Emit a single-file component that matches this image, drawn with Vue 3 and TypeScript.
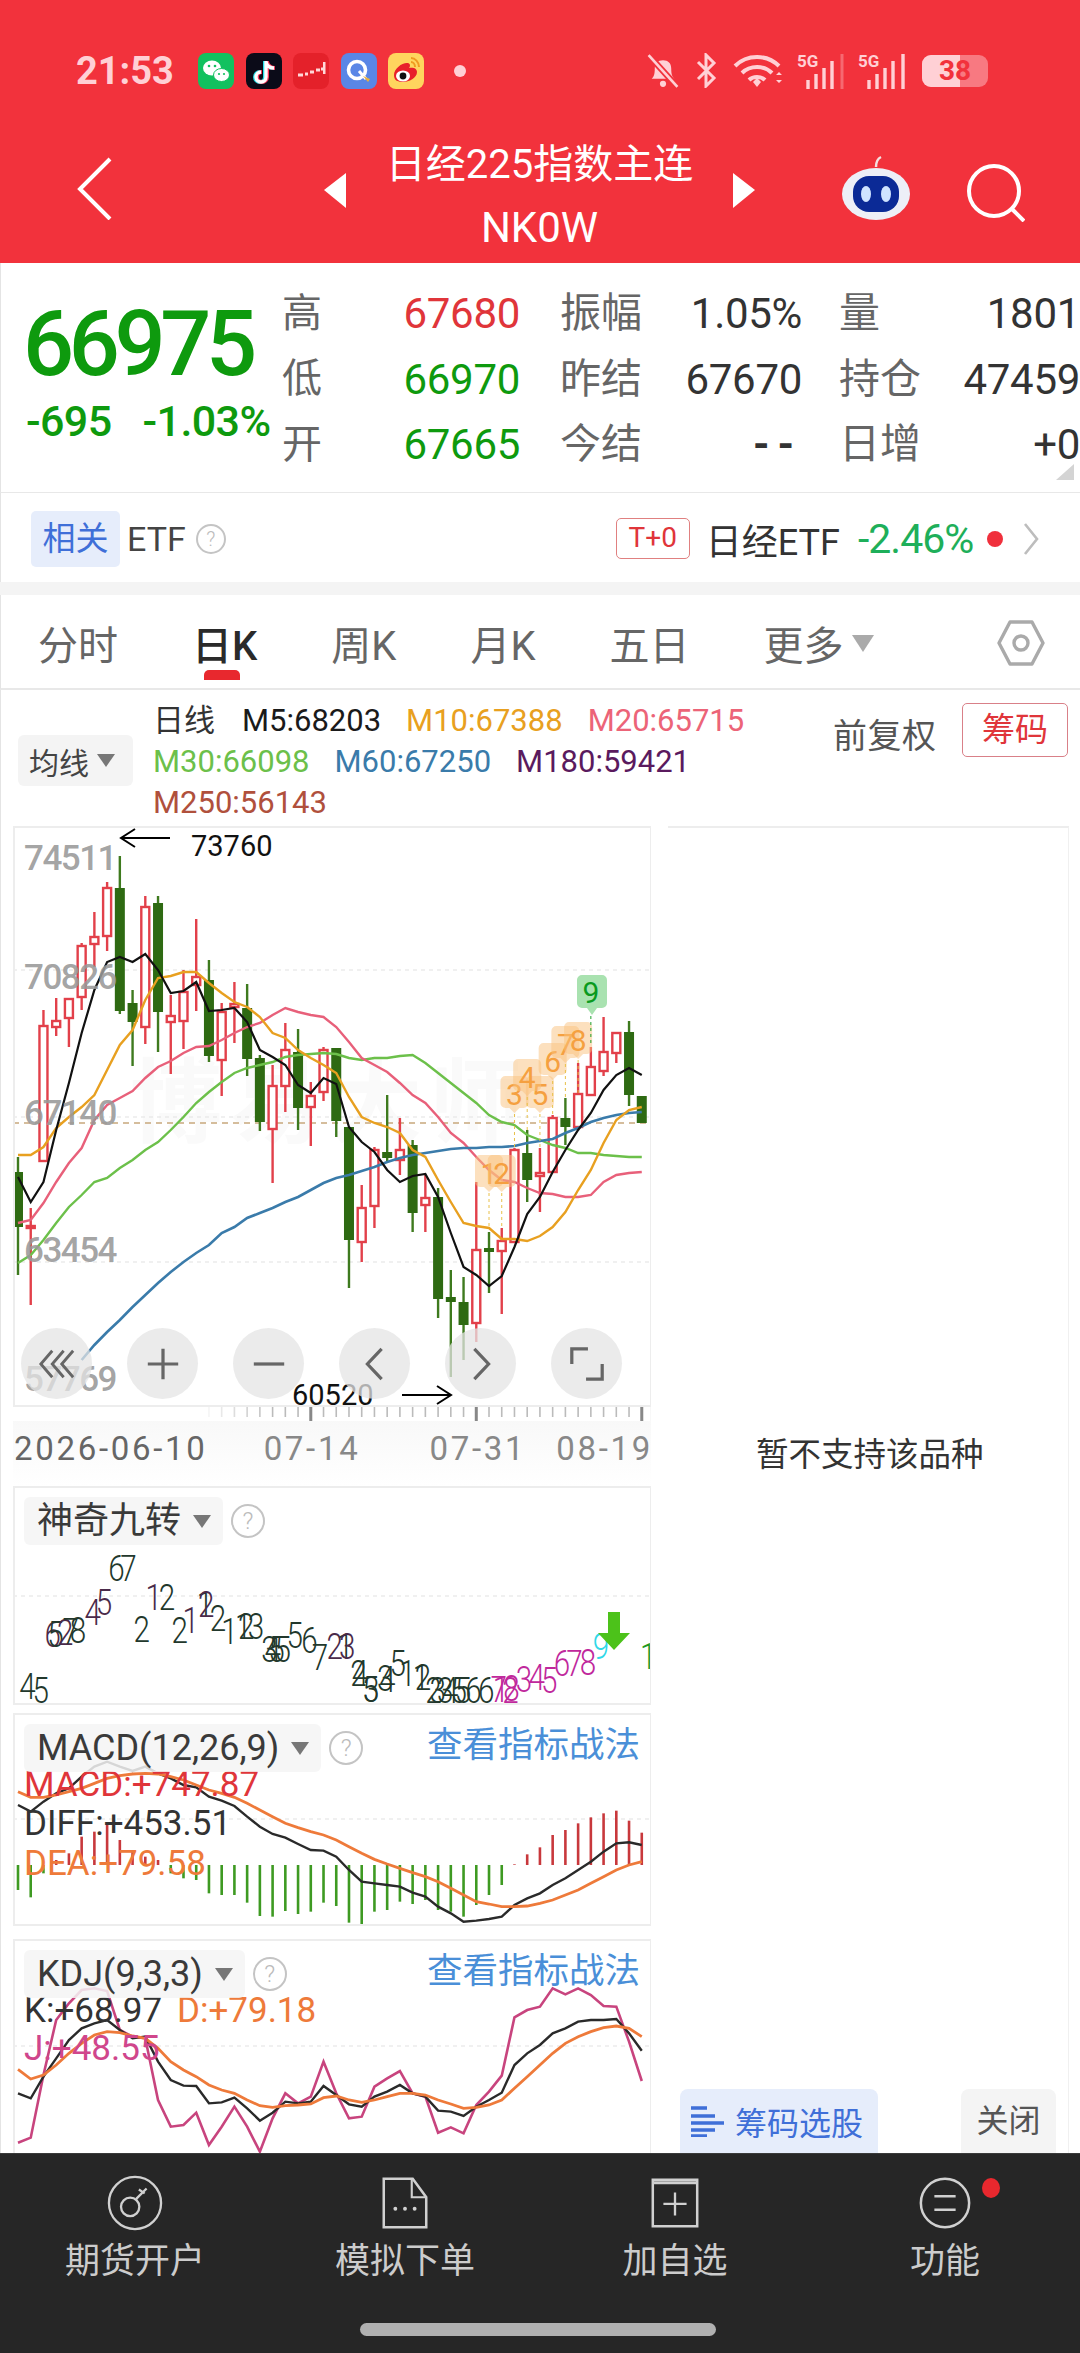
<template>
  <div class="page">
    <header class="top">
      <div class="status">
        <span class="clock">21:53</span>
        <div class="apps">
          <svg class="app" viewBox="0 0 36 36"><rect width="36" height="36" rx="8" fill="#12C15F"/><ellipse cx="14" cy="15" rx="9" ry="7.5" fill="#fff"/><ellipse cx="23.5" cy="22" rx="8" ry="6.5" fill="#fff" stroke="#12C15F"/><circle cx="11" cy="13" r="1.3" fill="#12C15F"/><circle cx="17" cy="13" r="1.3" fill="#12C15F"/><circle cx="21" cy="21" r="1.1" fill="#12C15F"/><circle cx="26" cy="21" r="1.1" fill="#12C15F"/></svg>
          <svg class="app" viewBox="0 0 36 36"><rect width="36" height="36" rx="8" fill="#0B0B18"/><path d="M20 7v16a5 5 0 1 1-5-5M20 8c1 4 4 6 8 6" fill="none" stroke="#25E0E8" stroke-width="4" transform="translate(-1 1)"/><path d="M20 7v16a5 5 0 1 1-5-5M20 8c1 4 4 6 8 6" fill="none" stroke="#F43A5C" stroke-width="4" transform="translate(1 1)"/><path d="M20 7v16a5 5 0 1 1-5-5M20 8c1 4 4 6 8 6" fill="none" stroke="#fff" stroke-width="3.4" transform="translate(0 1)"/></svg>
          <svg class="app" viewBox="0 0 36 36"><rect width="36" height="36" rx="8" fill="#E4212A"/><path d="M5 22h5M12 21h3M17 19h4M23 17h4M28 16h3" stroke="#FFD8D8" stroke-width="3"/><rect x="30" y="9" width="2.5" height="12" fill="#FFD8D8"/></svg>
          <svg class="app" viewBox="0 0 36 36"><rect width="36" height="36" rx="8" fill="#5A86E6"/><circle cx="16" cy="17" r="8.5" fill="none" stroke="#fff" stroke-width="3.6"/><path d="M18 18l7 8" stroke="#fff" stroke-width="3"/><path d="M22 23l5 6 2-3z" fill="#E8B040"/></svg>
          <svg class="app" viewBox="0 0 36 36"><rect width="36" height="36" rx="8" fill="#FFD55E"/><path d="M6 22c0-7 9-13 14-12 3 1 2 4 1 5 4-1 8 0 8 4 0 6-8 10-14 10S6 27 6 22z" fill="#E8202A"/><ellipse cx="15" cy="23" rx="7" ry="5.5" fill="#fff"/><circle cx="15" cy="23" r="3.4" fill="#111"/><path d="M23 5c4 0 8 4 8 9M23 9c2 0 4 2 4 5" fill="none" stroke="#F09A20" stroke-width="2"/></svg>
          <span class="status-dot"></span>
        </div>
        <div class="sys">
          <svg class="s-bell" viewBox="0 0 34 35"><path d="M6 25c2-2 3-4 3-10 0-5 3-8 8-8s8 3 8 8c0 6 1 8 3 10z" fill="#FFD0D5"/><circle cx="17" cy="30" r="3" fill="#FFD0D5"/><path d="M3 2l28 31" stroke="#F2323C" stroke-width="6"/><path d="M3 2l28 31" stroke="#FFD0D5" stroke-width="2.6"/></svg>
          <svg class="s-bt" viewBox="0 0 23 35"><path d="M3 9l16 16-8 8V2l8 8L3 26" fill="none" stroke="#FFD0D5" stroke-width="3"/></svg>
          <svg class="s-wifi" viewBox="0 0 51 35"><path d="M3 13c12-12 32-12 44 0M10 20c8-8 22-8 30 0M17 27c4-4 12-4 16 0" fill="none" stroke="#FFD0D5" stroke-width="4"/><path d="M21 29l4-4 4 4-4 5z" fill="#FFD0D5"/><path d="M44 22l3-3 3 3zM44 27l3 3 3-3z" fill="#FFD0D5"/></svg>
          <svg class="s-sig" viewBox="0 0 47 36"><text x="0" y="14" class="fiveg">5G</text><path d="M11 36V27M19 36V21M27 36V15M35 36V8" stroke="#FFD0D5" stroke-width="3.4"/><path d="M45 36V1" stroke="#FFD0D5" stroke-opacity=".35" stroke-width="3"/></svg>
          <svg class="s-sig" viewBox="0 0 47 36"><text x="0" y="14" class="fiveg">5G</text><path d="M11 36V27M19 36V21M27 36V15M35 36V8M45 36V1" stroke="#FFD0D5" stroke-width="3.4"/></svg>
          <div class="battery"><span class="battery-fill"></span><span class="battery-num">38</span></div>
        </div>
      </div>
      <div class="nav">
        <svg class="back" viewBox="0 0 35 63"><path d="M33 2L3 32l30 30" fill="none" stroke="#fff" stroke-width="4"/></svg>
        <svg class="tri tri-l" viewBox="0 0 22 35"><path d="M22 0v35L0 17z" fill="#fff"/></svg>
        <div class="title">
          <div class="title-main">日经225指数主连</div>
          <div class="title-sub">NK0W</div>
        </div>
        <svg class="tri tri-r" viewBox="0 0 22 35"><path d="M0 0v35l22-18z" fill="#fff"/></svg>
        <svg class="robot" viewBox="0 0 72 65">
          <path d="M36 12c0-5 1-8 5-10" fill="none" stroke="#F4E0E0" stroke-width="2.5"/>
          <ellipse cx="36" cy="39" rx="34" ry="26" fill="#EDEFF7"/>
          <rect x="13" y="21" width="46" height="36" rx="16" fill="#0B2A96"/>
          <ellipse cx="26" cy="39" rx="5" ry="8" fill="#CFE3FF"/>
          <ellipse cx="46" cy="39" rx="5" ry="8" fill="#CFE3FF"/>
        </svg>
        <svg class="search" viewBox="0 0 58 58"><circle cx="27" cy="27" r="25" fill="none" stroke="#fff" stroke-width="4"/><path d="M45 45l12 12" stroke="#fff" stroke-width="4"/></svg>
      </div>
    </header>

    <section class="quote">
      <div class="price-box">
        <div class="price">66975</div>
        <div class="change"><span>-695</span><span>-1.03%</span></div>
      </div>
      <div class="quote-grid">
        <template v-for="row in quoteRows" :key="row[0]">
          <span class="lb">{{ row[0] }}</span><span :class="['val', row[2]]">{{ row[1] }}</span>
          <span class="lb lb2">{{ row[3] }}</span><span :class="['val', 'dark', { dash: row[4] === '--' }]">{{ row[4] }}</span>
          <span class="lb lb3">{{ row[5] }}</span><span class="val dark last">{{ row[6] }}</span>
        </template>
      </div>
      <span class="corner"></span>
    </section>

    <section class="related">
      <span class="rel-tag">相关</span>
      <span class="rel-name">ETF</span>
      <span class="help help-sm">?</span>
      <span class="t0">T+0</span>
      <span class="etf-name">日经ETF</span>
      <span class="etf-pct">-2.46%</span>
      <span class="etf-dot"></span>
      <svg class="etf-more" viewBox="0 0 16 32"><path d="M2 1l12 15L2 31" fill="none" stroke="#BDBDBD" stroke-width="2.6"/></svg>
    </section>

    <div class="strip"></div>

    <nav class="tabs">
      <span v-for="t in tabs" :key="t" :class="['tab', { active: t === '日K' }]">{{ t }}</span>
      <span class="tab more">更多<i class="more-tri"></i></span>
      <svg class="hex" viewBox="0 0 48 46"><path d="M13 2h22l11 21-11 21H13L2 23z" fill="none" stroke="#AAA" stroke-width="3.4" stroke-linejoin="round"/><circle cx="24" cy="23" r="7" fill="none" stroke="#AAA" stroke-width="3.4"/></svg>
    </nav>

    <section class="legend">
      <div class="ma-pill">均线<i class="dd"></i></div>
      <div class="ma-values">
        <div class="ma-row"><span class="ma-title">日线</span><span v-for="m in maRow1" :key="m.t" :style="{ color: m.c }">{{ m.t }}</span></div>
        <div class="ma-row"><span v-for="m in maRow2" :key="m.t" :style="{ color: m.c }">{{ m.t }}</span></div>
        <div class="ma-row"><span style="color: #B0503C">M250:56143</span></div>
      </div>
      <span class="fq">前复权</span>
      <span class="chip-btn">筹码</span>
    </section>

    <main class="body">
      <div class="charts">
        <div class="panel main-panel">
          <svg class="plot" viewBox="13 826 637 580">
            <text x="330" y="1135" class="watermark" text-anchor="middle">博易大师</text>
            <path v-for="g in mainGrid" :key="g" :d="`M13 ${g}H650`" class="grid"/>
            <path d="M13 1123H650" stroke="#C8A87C" stroke-width="1.4" stroke-dasharray="6 5"/>
            <g v-for="(c, i) in candles" :key="i">
              <path :d="`M${cx(i)} ${c[0]}V${c[3]}`" :stroke="c[4] === 'r' ? '#E2404A' : '#3E7A1E'" stroke-width="2.4"/>
              <rect v-if="c[4] === 'r'" :x="cx(i) - 4" :y="c[1]" width="8" :height="Math.max(c[2] - c[1], 2)" fill="#fff" stroke="#E2404A" stroke-width="2.4"/>
              <rect v-else :x="cx(i) - 5" :y="c[1]" width="10" :height="c[2] - c[1]" fill="#2E6A12"/>
            </g>
            <polyline v-for="l in maLines" :key="l.c" :points="linePts(l.y, l.from)" fill="none" :stroke="l.c" :stroke-width="l.w"/>
            <g v-for="b in bubbles" :key="b.t + b.i">
              <path :d="`M${cx(b.i)} ${b.y + 20}V${b.y + 55}`" stroke="#E8C048" stroke-width="1" stroke-dasharray="3 3"/>
              <path :d="bubble(cx(b.i), b.y)" fill="#F9C27E" fill-opacity=".5"/>
              <text :x="cx(b.i)" :y="b.y + 11" class="bubble-num" text-anchor="middle">{{ b.t }}</text>
            </g>
            <path :d="`M${cx(45)} 1016V1046`" stroke="#1FA02E" stroke-width="1" stroke-dasharray="3 3"/>
            <path d="M582 975h20a5 5 0 0 1 5 5v23a5 5 0 0 1-5 5h-5l-5 7-5-7h-5a5 5 0 0 1-5-5v-23a5 5 0 0 1 5-5z" fill="#A9E2B0"/>
            <text x="591" y="1003" class="nine" text-anchor="middle">9</text>
            <text v-for="a in axisLabels" :key="a.t" x="24" :y="a.y" class="axis">{{ a.t }}</text>
            <text x="191" y="856" class="mark">73760</text>
            <path d="M170 838H122M135 829l-14 9 14 9" fill="none" stroke="#000" stroke-width="2"/>
            <text x="292" y="1405" class="mark">60520</text>
            <path d="M402 1395H450M437 1386l14 9-14 9" fill="none" stroke="#000" stroke-width="2"/>
          </svg>
          <div class="tools">
            <span class="tool"><svg viewBox="0 0 40 40"><path d="M15 6L3 20l12 14M27 6L15 20l12 14M37 6L25 20l12 14" fill="none" stroke="#666" stroke-width="3"/></svg></span>
            <span class="tool"><svg viewBox="0 0 40 40"><path d="M20 4v32M4 20h32" fill="none" stroke="#666" stroke-width="3.4"/></svg></span>
            <span class="tool"><svg viewBox="0 0 40 40"><path d="M4 20h32" fill="none" stroke="#666" stroke-width="3.4"/></svg></span>
            <span class="tool"><svg viewBox="0 0 40 40"><path d="M27 4L12 20l15 16" fill="none" stroke="#666" stroke-width="3.4"/></svg></span>
            <span class="tool"><svg viewBox="0 0 40 40"><path d="M13 4l15 16-15 16" fill="none" stroke="#666" stroke-width="3.4"/></svg></span>
            <span class="tool"><svg viewBox="0 0 40 40"><path d="M21 4H4v16M19 36h17V20" fill="none" stroke="#666" stroke-width="3.4"/></svg></span>
          </div>
        </div>

        <div class="dates">
          <svg class="ticks" viewBox="13 0 637 14">
            <path v-for="i in tickIdx" :key="i" :d="`M${cx(i)} ${majorTicks.includes(i) ? 14 : 10}V0`" :stroke="majorTicks.includes(i) ? '#888' : '#BBB'" :stroke-opacity="i < 20 ? (i - 14) / 6 : 1" :stroke-width="majorTicks.includes(i) ? 3 : 1.6"/>
          </svg>
          <div class="date-row">
            <span class="d-first">2026-06-10</span><span>07-14</span><span>07-31</span><span>08-19</span>
          </div>
        </div>

        <div class="panel nine-panel">
          <div class="ind-head"><span class="ind-pill">神奇九转<i class="dd"></i></span><span class="help">?</span></div>
          <svg class="plot" viewBox="13 1486 637 219">
            <path d="M13 1596H650" class="grid"/>
            <text v-for="(d, i) in nineDigits" :key="i" :transform="`translate(${d[0] / 2.376} ${1480 + d[1] / 3 + 13}) scale(.8 1)`" class="td" text-anchor="middle" :fill="tdColor(d[3])">{{ d[2] }}</text>
            <path d="M608 1612h12v21h10l-16 17-16-17h10z" fill="#4CC21A"/>
          </svg>
        </div>

        <div class="panel macd-panel">
          <div class="ind-head"><span class="ind-pill">MACD(12,26,9)<i class="dd"></i></span><span class="help">?</span><span class="link">查看指标战法</span></div>
          <svg class="plot" viewBox="13 1713 637 213">
            <path d="M13 1819H650" class="grid"/>
            <path v-for="(b, i) in macdBars" :key="i" :d="`M${cx(i)} 1865V${1710 + b / 3}`" :stroke="b < 465 ? '#C8383C' : '#3E9A22'" stroke-width="2.6"/>
            <polyline :points="linePts(diffLine)" fill="none" stroke="#2A2A2A" stroke-width="2.4"/>
            <polyline :points="linePts(deaLine)" fill="none" stroke="#EE7A3A" stroke-width="2.8"/>
            <text x="24" y="1796" class="val-text" fill="#E0353A">MACD:+747.87</text>
            <text x="24" y="1835" class="val-text" fill="#333">DIFF:+453.51</text>
            <text x="24" y="1875" class="val-text" fill="#EE7A3A">DEA:+79.58</text>
          </svg>
        </div>

        <div class="panel kdj-panel">
          <div class="ind-head"><span class="ind-pill">KDJ(9,3,3)<i class="dd"></i></span><span class="help">?</span><span class="link">查看指标战法</span></div>
          <svg class="plot" viewBox="13 1939 637 214">
            <path d="M13 2046H650" class="grid"/>
            <polyline :points="kdjPts(jLine)" fill="none" stroke="#C8447E" stroke-width="2.6"/>
            <polyline :points="kdjPts(kLine)" fill="none" stroke="#2A2A2A" stroke-width="2.4"/>
            <polyline :points="kdjPts(dLine)" fill="none" stroke="#EE7A3A" stroke-width="2.8"/>
            <text x="24" y="2022" class="val-text" fill="#333">K:+68.97</text>
            <text x="177" y="2022" class="val-text" fill="#EE7A3A">D:+79.18</text>
            <text x="24" y="2060" class="val-text" fill="#D0468C">J:+48.55</text>
          </svg>
        </div>
      </div>

      <aside class="side">
        <div class="side-msg">暂不支持该品种</div>
        <div class="side-actions">
          <span class="pick">
            <svg viewBox="0 0 33 32"><path d="M0 3h16M0 11h24M0 18h33M0 25h24M0 31h16" stroke="#3F6FD8" stroke-width="3.6"/></svg>
            筹码选股
          </span>
          <span class="close">关闭</span>
        </div>
      </aside>
    </main>

    <footer class="bottom">
      <div class="bottom-row">
        <div class="b-item">
          <svg class="b-icon" viewBox="0 0 58 58"><circle cx="29" cy="29" r="27" fill="none" stroke="#D0D0D0" stroke-width="2.4"/><circle cx="24" cy="33" r="9.5" fill="none" stroke="#D0D0D0" stroke-width="2.4"/><path d="M30 25l11-11M33 15l6 4" fill="none" stroke="#D0D0D0" stroke-width="2.4"/></svg>
          <span>期货开户</span>
        </div>
        <div class="b-item">
          <svg class="b-icon" viewBox="0 0 58 58"><path d="M7 4h30l14 19v31H7z" fill="none" stroke="#D0D0D0" stroke-width="2.6"/><path d="M36 4v19h15" fill="none" stroke="#D0D0D0" stroke-width="2.2"/><circle cx="19" cy="35" r="2" fill="#D0D0D0"/><circle cx="29" cy="35" r="2" fill="#D0D0D0"/><circle cx="39" cy="35" r="2" fill="#D0D0D0"/></svg>
          <span>模拟下单</span>
        </div>
        <div class="b-item">
          <svg class="b-icon" viewBox="0 0 58 58"><path d="M6 5h46v48H6z" fill="none" stroke="#D0D0D0" stroke-width="2.6"/><path d="M6 8h46" stroke="#D0D0D0" stroke-width="3"/><path d="M29 18v24M17 30h24" stroke="#D0D0D0" stroke-width="2.4"/></svg>
          <span>加自选</span>
        </div>
        <div class="b-item">
          <svg class="b-icon" viewBox="0 0 58 58"><ellipse cx="29" cy="29" rx="25" ry="25" fill="none" stroke="#D0D0D0" stroke-width="2.6"/><path d="M18 22h22M18 36h22" stroke="#D0D0D0" stroke-width="2.6"/></svg>
          <i class="b-dot"></i>
          <span>功能</span>
        </div>
      </div>
      <div class="home-bar"></div>
    </footer>
  </div>
</template>

<script setup lang="ts">
type Candle = [number, number, number, number, 'r' | 'g']

const quoteRows = [
  ['高', '67680', 'red', '振幅', '1.05%', '量', '1801'],
  ['低', '66970', 'green', '昨结', '67670', '持仓', '47459'],
  ['开', '67665', 'green', '今结', '--', '日增', '+0']
]

const tabs = ['分时', '日K', '周K', '月K', '五日']

const maRow1 = [
  { t: 'M5:68203', c: '#1A1A1A' },
  { t: 'M10:67388', c: '#E8A020' },
  { t: 'M20:65715', c: '#EC6478' }
]
const maRow2 = [
  { t: 'M30:66098', c: '#6CC04A' },
  { t: 'M60:67250', c: '#3A7BAA' },
  { t: 'M180:59421', c: '#5A1A5E' }
]

const cx = (i: number) => 18 + i * 12.73

const candles: Candle[] = [
  [1157, 1172, 1227, 1275, 'g'], [1208, 1226, 1228, 1305, 'r'], [1010, 1026, 1161, 1161, 'r'], [998, 1021, 1027, 1036, 'r'],
  [998, 999, 1018, 1047, 'r'], [943, 946, 997, 1010, 'r'], [912, 937, 944, 967, 'r'], [882, 888, 936, 951, 'r'],
  [856, 888, 1011, 1014, 'g'], [990, 1003, 1022, 1066, 'g'], [896, 907, 1027, 1044, 'r'], [896, 903, 1012, 1052, 'g'],
  [995, 1016, 1022, 1074, 'r'], [970, 992, 1021, 1049, 'r'], [919, 977, 985, 1011, 'r'], [960, 980, 1056, 1062, 'g'],
  [1003, 1012, 1060, 1096, 'r'], [982, 1004, 1007, 1043, 'r'], [984, 1008, 1059, 1076, 'g'], [1055, 1058, 1122, 1131, 'g'],
  [1065, 1086, 1129, 1183, 'r'], [1023, 1050, 1086, 1112, 'r'], [1029, 1052, 1108, 1130, 'g'], [1082, 1096, 1107, 1146, 'r'],
  [1047, 1050, 1092, 1101, 'r'], [1048, 1048, 1121, 1137, 'g'], [1127, 1127, 1240, 1288, 'g'], [1185, 1208, 1242, 1262, 'r'],
  [1147, 1150, 1206, 1228, 'r'], [1095, 1152, 1158, 1162, 'g'], [1118, 1150, 1160, 1175, 'r'], [1140, 1145, 1213, 1232, 'g'],
  [1175, 1198, 1205, 1232, 'r'], [1188, 1197, 1299, 1318, 'g'], [1270, 1297, 1302, 1377, 'g'], [1277, 1302, 1325, 1360, 'g'],
  [1182, 1250, 1323, 1342, 'r'], [1232, 1248, 1252, 1293, 'g'], [1228, 1241, 1251, 1314, 'r'], [1148, 1150, 1242, 1243, 'r'],
  [1130, 1153, 1180, 1202, 'g'], [1148, 1173, 1176, 1212, 'r'], [1115, 1118, 1172, 1172, 'r'], [1098, 1118, 1127, 1145, 'g'],
  [1063, 1094, 1127, 1128, 'r'], [1047, 1067, 1095, 1095, 'r'], [1017, 1052, 1071, 1076, 'r'], [1032, 1033, 1053, 1063, 'r'],
  [1021, 1032, 1095, 1106, 'g'], [1096, 1096, 1123, 1123, 'g']
]

const maLines = [
  { c: '#6CC04A', w: 2.4, from: 0, y: [1263, 1255, 1240, 1223, 1207, 1195, 1182, 1178, 1168, 1160, 1150, 1142, 1130, 1117, 1103, 1092, 1082, 1073, 1068, 1065, 1062, 1057, 1055, 1054, 1053, 1054, 1058, 1060, 1058, 1058, 1056, 1055, 1063, 1073, 1083, 1093, 1103, 1115, 1122, 1125, 1135, 1140, 1145, 1148, 1153, 1153, 1155, 1156, 1157, 1157] },
  { c: '#E8607A', w: 2.4, from: 0, y: [1223, 1220, 1203, 1182, 1163, 1148, 1120, 1105, 1098, 1091, 1078, 1067, 1061, 1053, 1047, 1046, 1040, 1033, 1027, 1023, 1015, 1008, 1012, 1015, 1017, 1027, 1042, 1058, 1065, 1072, 1083, 1095, 1103, 1117, 1133, 1143, 1157, 1170, 1180, 1182, 1188, 1193, 1194, 1197, 1197, 1195, 1182, 1175, 1173, 1172] },
  { c: '#3A7BAA', w: 2.6, from: 5, y: [1360, 1345, 1332, 1320, 1307, 1295, 1283, 1272, 1262, 1253, 1245, 1233, 1227, 1218, 1213, 1208, 1202, 1197, 1190, 1183, 1178, 1175, 1171, 1167, 1162, 1158, 1155, 1153, 1151, 1149, 1148, 1148, 1147, 1147, 1146, 1143, 1141, 1139, 1133, 1128, 1122, 1118, 1115, 1113, 1112] },
  { c: '#E8A020', w: 2.4, from: 0, y: [1155, 1155, 1147, 1128, 1117, 1107, 1095, 1070, 1045, 1030, 1000, 978, 976, 972, 972, 983, 993, 1002, 1007, 1017, 1033, 1038, 1050, 1058, 1065, 1073, 1097, 1117, 1123, 1127, 1133, 1150, 1157, 1180, 1202, 1223, 1226, 1228, 1239, 1239, 1241, 1236, 1227, 1212, 1190, 1170, 1143, 1120, 1110, 1107] },
  { c: '#111', w: 2.2, from: 0, y: [1177, 1202, 1182, 1130, 1083, 1033, 990, 962, 957, 962, 954, 970, 993, 991, 982, 1011, 1010, 1008, 1022, 1050, 1057, 1065, 1085, 1093, 1078, 1084, 1127, 1142, 1152, 1170, 1182, 1176, 1174, 1197, 1233, 1267, 1275, 1286, 1276, 1247, 1214, 1197, 1172, 1150, 1130, 1113, 1090, 1075, 1068, 1075] }
]

const linePts = (ys: number[], from = 0) => ys.map((y, i) => `${cx(i + from)},${y}`).join(' ')
const kdjPts = (zs: number[]) => zs.map((z, i) => `${cx(i)},${1930 + z / 3}`).join(' ')

const mainGrid = [970, 1117, 1262]
const axisLabels = [
  { t: '74511', y: 870 }, { t: '70826', y: 989 }, { t: '67140', y: 1125 }, { t: '63454', y: 1262 }, { t: '57769', y: 1391 }
]

const bubbles = [
  { t: '1', i: 37, y: 1173 }, { t: '2', i: 38, y: 1173 }, { t: '3', i: 39, y: 1094 }, { t: '5', i: 41, y: 1094 },
  { t: '4', i: 40, y: 1077 }, { t: '6', i: 42, y: 1061 }, { t: '7', i: 43, y: 1044 }, { t: '8', i: 44, y: 1040 }
]
const bubble = (x: number, y: number) =>
  `M${x - 9} ${y - 18}h18a5 5 0 0 1 5 5v22a5 5 0 0 1-5 5h-4l-5 5-5-5h-4a5 5 0 0 1-5-5v-22a5 5 0 0 1 5-5z`

const majorTicks = [23, 36, 49]
const tickIdx = Array.from({ length: 35 }, (_, i) => i + 15)

// zoomed x, zoomed y, digit, colour key
const nineDigits: [number, number, string, string][] = [
  [65, 617, '4', 'd'], [97, 630, '5', 'd'], [125, 462, '6', 'p'], [132, 462, '5', 'd'], [155, 455, '2', 'p'], [168, 452, '7', 'd'],
  [185, 450, '8', 'd'], [220, 395, '4', 'p'], [247, 365, '5', 'p'], [277, 265, '6', 'd'], [305, 265, '7', 'd'], [337, 447, '2', 'd'],
  [365, 350, '1', 'p'], [397, 350, '2', 'd'], [427, 450, '2', 'd'], [453, 420, '1', 'p'], [487, 372, '1', 'd'], [490, 372, '2', 'p'],
  [518, 415, '2', 'd'], [545, 452, '1', 'd'], [578, 437, '1', 'd'], [585, 437, '2', 'd'], [608, 437, '3', 'd'], [640, 507, '3', 'd'],
  [648, 507, '4', 'd'], [657, 507, '5', 'd'], [672, 507, '5', 'd'], [700, 465, '5', 'd'], [735, 480, '6', 'd'], [760, 530, '7', 'd'],
  [795, 497, '2', 'p'], [820, 497, '1', 'd'], [825, 497, '3', 'p'], [852, 580, '2', 'd'], [855, 580, '4', 'd'], [882, 627, '3', 'd'],
  [880, 627, '5', 'd'], [915, 595, '3', 'd'], [920, 597, '4', 'd'], [945, 550, '5', 'd'], [968, 578, '1', 'd'], [1000, 592, '1', 'd'],
  [1005, 592, '2', 'd'], [1030, 630, '2', 'd'], [1040, 630, '3', 'd'], [1058, 630, '3', 'd'], [1070, 630, '4', 'd'], [1090, 630, '5', 'd'],
  [1100, 630, '5', 'd'], [1125, 630, '6', 'd'], [1155, 630, '6', 'd'], [1185, 627, '7', 'm'], [1190, 627, '1', 'm'], [1213, 630, '2', 'm'],
  [1215, 625, '8', 'm'], [1245, 597, '3', 'm'], [1275, 590, '4', 'm'], [1305, 600, '5', 'm'], [1335, 550, '6', 'm'], [1365, 550, '7', 'm'],
  [1397, 545, '8', 'm'], [1428, 497, '9', 'c'], [1540, 527, '1', 'g']
]
const tdColor = (k: string) =>
  ({ d: '#22382C', p: '#4A2A4A', m: '#C0289C', c: '#30D8E8', g: '#1F9A1F' } as Record<string, string>)[k]

const macdBars = [540, 562, 490, 450, 430, 380, 365, 340, 390, 420, 440, 450, 490, 505, 510, 550, 555, 555, 578, 618, 620, 603, 612, 605, 578, 588, 638, 648, 605, 600, 575, 582, 570, 600, 605, 620, 585, 555, 525, 463, 433, 412, 375, 360, 340, 322, 310, 302, 332, 368]
const macdY = (zs: number[]) => zs.map(z => 1710 + z / 3)
const diffLine = macdY([285, 305, 275, 250, 235, 200, 170, 155, 170, 183, 170, 190, 205, 225, 232, 260, 272, 288, 320, 350, 372, 383, 402, 420, 422, 440, 480, 515, 520, 525, 530, 548, 560, 590, 610, 635, 632, 627, 620, 585, 565, 550, 525, 505, 480, 455, 425, 400, 397, 405])
const deaLine = macdY([245, 262, 262, 255, 245, 235, 220, 205, 197, 192, 190, 192, 200, 210, 225, 240, 250, 262, 280, 300, 320, 340, 353, 365, 375, 390, 410, 430, 448, 462, 475, 488, 500, 515, 535, 555, 575, 582, 590, 590, 588, 580, 570, 555, 540, 520, 500, 480, 465, 455])

const kLine = [490, 505, 440, 385, 330, 295, 280, 270, 300, 325, 320, 395, 450, 467, 468, 520, 517, 503, 535, 572, 548, 515, 520, 515, 468, 495, 523, 530, 500, 485, 465, 490, 500, 542, 545, 558, 530, 510, 488, 405, 370, 345, 310, 295, 275, 270, 270, 267, 310, 362]
const dLine = [418, 447, 435, 405, 370, 340, 315, 305, 308, 318, 325, 355, 395, 420, 440, 465, 480, 490, 510, 527, 532, 527, 525, 522, 503, 498, 510, 517, 510, 500, 490, 490, 495, 510, 522, 535, 532, 525, 510, 475, 440, 405, 370, 340, 320, 305, 293, 288, 295, 320]
const jLine = [638, 623, 435, 270, 220, 180, 175, 183, 300, 320, 325, 510, 590, 585, 548, 645, 590, 530, 590, 665, 565, 490, 520, 500, 395, 490, 565, 560, 470, 445, 423, 490, 500, 608, 592, 610, 525, 485, 437, 262, 240, 230, 175, 193, 175, 195, 228, 230, 335, 453]
</script>

<style>
html, body { margin: 0; background: #fff; }
</style>

<style scoped>
* { box-sizing: border-box; }

.page {
  width: 1080px;
  height: 2353px;
  overflow: hidden;
  display: flex;
  flex-direction: column;
  background: #fff;
  font-family: Roboto, "Noto Sans CJK SC", sans-serif;
  color: #333;
}

.top { height: 263px; background: #F2323C; flex-shrink: 0; }

.status { height: 53px; margin-top: 44px; padding: 0 92px 0 76px; display: flex; align-items: center; }
.clock { font-size: 38px; font-weight: 700; color: #FFD0D5; width: 122px; }
.apps { display: flex; align-items: center; gap: 11.5px; }
.app { width: 36px; height: 36px; display: block; }
.status-dot { width: 12px; height: 12px; border-radius: 50%; background: #FFD0D5; margin-left: 18px; }
.sys { margin-left: auto; display: flex; align-items: center; gap: 14px; }
.s-bell { width: 36px; height: 36px; }
.s-bt { width: 23px; height: 35px; }
.s-wifi { width: 51px; height: 35px; }
.s-sig { width: 47px; height: 36px; }
.fiveg { font-size: 17px; font-weight: 700; fill: #FFD0D5; }
.battery { position: relative; width: 66px; height: 32px; border-radius: 9px; background: rgba(255, 208, 213, .45); overflow: hidden; margin-left: 3px; }
.battery-fill { position: absolute; left: 0; top: 0; bottom: 0; width: 38px; background: #FFD0D5; }
.battery-num { position: relative; display: block; text-align: center; font-size: 28px; font-weight: 700; line-height: 32px; color: #F2323C; }

.nav { height: 166px; position: relative; display: flex; align-items: flex-start; padding-top: 38px; }
.back { width: 35px; height: 63px; margin: 22px 0 0 77px; }
.tri { width: 22px; height: 35px; margin-top: 38px; }
.tri-l { margin-left: 212px; }
.tri-r { margin-left: 0; }
.title { width: 387px; text-align: center; color: #fff; }
.title-main { font-size: 40px; line-height: 44px; margin-top: 8px; }
.title-sub { font-size: 42px; line-height: 44px; margin-top: 19px; }
.robot { width: 72px; height: 65px; margin: 20px 0 0 85px; }
.search { width: 58px; height: 58px; margin: 29px 0 0 55px; }

.quote { position: relative; height: 230px; display: flex; flex-shrink: 0; border-bottom: 1px solid #E8E8E8; border-left: 1px solid #E4E4E4; }
.price-box { width: 281px; padding: 32px 0 0 22px; color: #0E9A0E; }
.price { font-size: 90px; line-height: 100px; font-weight: 500; letter-spacing: -5.4px; }
.change { display: flex; gap: 31px; font-size: 43px; line-height: 46px; margin-top: 3px; letter-spacing: -.6px; padding-left: 3px; font-weight: 500; }
.quote-grid {
  display: grid;
  grid-template-columns: 120px 118px 162px 120px 128px 150px;
  grid-auto-rows: 65.5px;
  align-items: center;
  padding-top: 18px;
}
.lb { font-size: 40px; color: #666; line-height: 1; }
.lb2 { padding-left: 40px; font-size: 41px; }
.lb3 { padding-left: 37px; font-size: 41px; }
.val { font-size: 42px; text-align: right; letter-spacing: -.3px; }
.val.red { color: #E0353A; }
.val.green { color: #0E9A0E; }
.val.dark { color: #333; }
.val.dash { letter-spacing: 8px; font-weight: 700; }
.val.last { padding-right: 0; }
.corner { position: absolute; right: 6px; bottom: 12px; width: 0; height: 0; border-left: 18px solid transparent; border-bottom: 16px solid #D4D4D4; }

.related { height: 89px; flex-shrink: 0; display: flex; align-items: center; padding: 2px 0 0 30px; border-left: 1px solid #E4E4E4; }
.rel-tag { width: 89px; height: 56px; background: #E6EDFB; color: #3F6FD8; font-size: 33px; line-height: 56px; text-align: center; border-radius: 5px; }
.rel-name { font-size: 34px; color: #444; margin-left: 7px; }
.help {
  width: 34px; height: 34px; border: 2px solid #C4C4C4; border-radius: 50%; color: #BBB;
  font-size: 24px; line-height: 30px; text-align: center; font-weight: 300; flex-shrink: 0;
}
.help-sm { width: 30px; height: 30px; font-size: 20px; line-height: 26px; margin-left: 10px; }
.t0 { margin-left: 390px; width: 74px; height: 41px; border: 1px solid #E08080; border-radius: 5px; color: #E0353A; font-size: 28px; line-height: 38px; text-align: center; }
.etf-name { margin-left: 16px; font-size: 36px; color: #333; white-space: nowrap; }
.etf-pct { margin-left: 18px; font-size: 41px; color: #1EAF5A; letter-spacing: -1px; }
.etf-dot { margin-left: 14px; width: 16px; height: 16px; border-radius: 50%; background: #F0303C; }
.etf-more { margin-left: 20px; width: 16px; height: 32px; }

.strip { height: 13px; background: #F4F4F4; flex-shrink: 0; }

.tabs { position: relative; height: 95px; flex-shrink: 0; display: flex; align-items: center; gap: 74px; padding: 3px 0 0 37px; border-bottom: 2px solid #E8E8E8; border-left: 1px solid #E4E4E4; }
.tab { font-size: 40px; color: #666; white-space: nowrap; }
.tab.active { color: #2A2A2A; position: relative; font-weight: 500; }
.tab.active::after { content: ""; position: absolute; left: 12px; top: 56px; width: 36px; height: 10px; border-radius: 5px 5px 0 0; background: #E8282E; }
.more { display: flex; align-items: center; }
.more-tri { margin-left: 8px; border-left: 11px solid transparent; border-right: 11px solid transparent; border-top: 17px solid #AAA; }
.hex { position: absolute; right: 35px; top: 25px; width: 48px; height: 46px; }

.legend { height: 131px; flex-shrink: 0; position: relative; padding-left: 17px; display: flex; align-items: flex-start; border-left: 1px solid #E4E4E4; }
.ma-pill { margin-top: 45px; width: 115px; height: 51px; background: #F4F4F4; border-radius: 6px; font-size: 30px; color: #444; display: flex; align-items: center; padding-left: 11px; gap: 8px; }
.dd { display: inline-block; border-left: 9px solid transparent; border-right: 9px solid transparent; border-top: 13px solid #777; }
.ma-values { margin-left: 20px; padding-top: 10px; font-size: 31px; line-height: 41px; }
.ma-row { display: flex; gap: 25px; white-space: nowrap; }
.ma-title { color: #333; margin-right: 2px; }
.fq { position: absolute; left: 832px; top: 19px; font-size: 34px; color: #555; white-space: nowrap; letter-spacing: .5px; }
.chip-btn { position: absolute; left: 961px; top: 13px; width: 106px; height: 54px; border: 1px solid #D98088; border-radius: 5px; color: #E0353A; font-size: 33px; line-height: 52px; text-align: center; }

.body { height: 1332px; flex-shrink: 0; display: flex; padding-top: 5px; border-left: 1px solid #E4E4E4; }
.charts { width: 638px; margin-left: 12px; flex-shrink: 0; display: flex; flex-direction: column; }
.panel { position: relative; flex-shrink: 0; border: 2px solid #EDEDED; border-right-width: 1px; overflow: hidden; }
.main-panel { height: 581px; }
.nine-panel { height: 219px; }
.macd-panel { height: 213px; margin-top: 8px; }
.kdj-panel { height: 214px; margin-top: 13px; border-bottom: 0; }
.plot { position: absolute; left: -2px; top: -2px; width: 637px; height: auto; display: block; }

.watermark { font-size: 92px; font-weight: 700; fill: #FAFAFA; letter-spacing: 8px; }
.grid { stroke: #E2E2E2; stroke-width: 1.2; stroke-dasharray: 4 4; }
.axis { font-size: 35px; fill: #999; fill-opacity: .9; letter-spacing: -1.5px; font-weight: 500; }
.mark { font-size: 29px; fill: #111; }
.bubble-num { font-size: 30px; fill: #F5A040; }
.nine { font-size: 30px; fill: #0A9A1E; }
.td { font-size: 37px; font-weight: 300; }
.val-text { font-size: 35px; }

.tools { position: absolute; left: 6px; top: 500px; display: flex; gap: 35px; }
.tool { width: 71px; height: 71px; flex-shrink: 0; border-radius: 50%; background: rgba(228, 228, 228, .75); display: flex; align-items: center; justify-content: center; }
.tool svg { width: 38px; height: 38px; }

.dates { height: 79px; flex-shrink: 0; background: linear-gradient(to bottom, #F7F7F7, #fff); }
.ticks { display: block; width: 637px; height: 14px; background: #fff; }
.date-row { display: flex; font-size: 33px; color: #888; padding: 6px 0 0 1px; letter-spacing: 2.7px; line-height: 44px; white-space: nowrap; }
.date-row span:nth-child(2) { margin-left: 56px; }
.date-row span:nth-child(3) { margin-left: 69px; }
.date-row span:nth-child(4) { margin-left: 30px; }
.d-first { color: #666; }

.ind-head { position: absolute; z-index: 2; left: 9px; top: 9px; right: 10px; display: flex; align-items: center; }
.ind-pill { height: 48px; padding: 0 12px 0 13px; background: rgba(244, 244, 244, .85); border-radius: 6px; font-size: 36px; line-height: 48px; color: #3A3A3A; display: flex; align-items: center; gap: 12px; white-space: nowrap; }
.ind-head .help { margin-left: 8px; }
.link { margin-left: auto; font-size: 35.5px; color: #4A8FD8; margin-top: -13px; white-space: nowrap; }

.side { width: 401px; flex: none; margin-left: 17px; position: relative; display: flex; flex-direction: column; border-top: 2px solid #EDEDED; border-right: 1px solid #F0F0F0; }
.side-msg { position: absolute; left: 88px; top: 600px; font-size: 32.5px; color: #333; white-space: nowrap; }
.side-actions { margin-top: auto; height: 64px; display: flex; padding-left: 12px; }
.pick { width: 198px; height: 64px; background: #E6EDFB; border-radius: 8px 8px 0 0; color: #3F6FD8; font-size: 32px; display: flex; align-items: center; padding-left: 11px; gap: 11px; white-space: nowrap; flex-shrink: 0; }
.pick svg { width: 33px; height: 32px; }
.close { margin-left: 83px; width: 95px; height: 64px; background: #F4F4F4; border-radius: 8px 8px 0 0; color: #555; font-size: 32px; line-height: 64px; text-align: center; flex-shrink: 0; }

.bottom { flex: 1; background: #262626; position: relative; border-top: 1px solid #3A3A3A; }
.bottom-row { display: flex; padding-top: 21px; }
.b-item { position: relative; width: 270px; display: flex; flex-direction: column; align-items: center; color: #CCC; font-size: 35px; line-height: 48px; }
.b-icon { width: 56px; height: 56px; margin-bottom: 7px; }
.b-dot { position: absolute; left: 172px; top: 3px; width: 18px; height: 20px; border-radius: 50%; background: #E8282E; }
.home-bar { position: absolute; left: 360px; top: 169px; width: 356px; height: 13px; border-radius: 7px; background: #B0B0B0; }
</style>
